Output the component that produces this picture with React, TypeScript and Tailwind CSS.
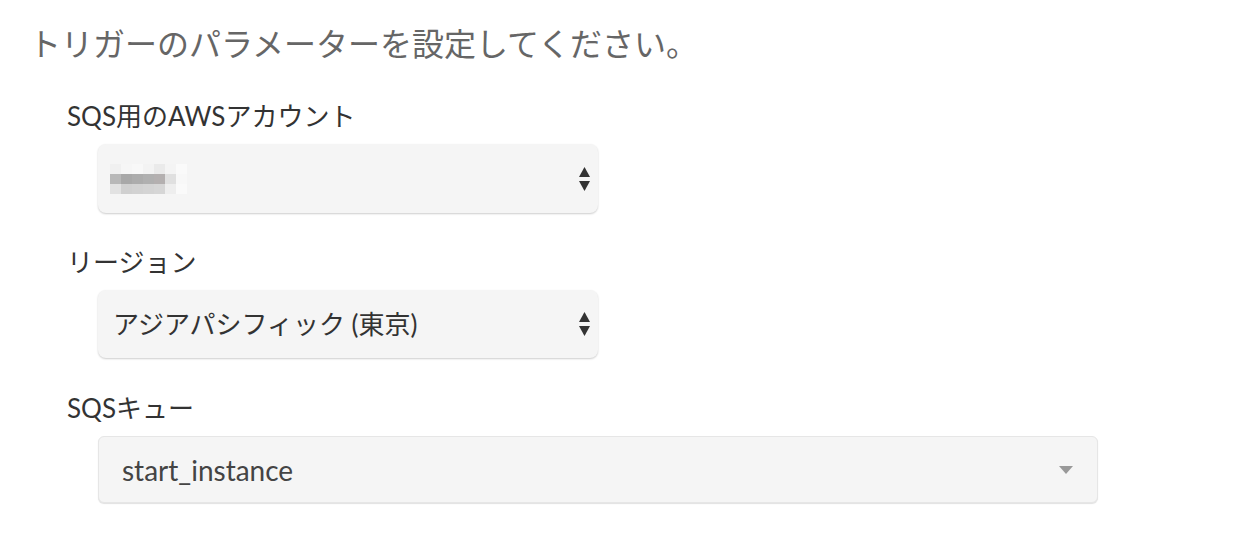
import React from "react";

const font = { fontFamily: 'Lato, "Noto Sans CJK JP", sans-serif' } as React.CSSProperties;

function UpDown() {
  return (
    <svg width="13" height="26" viewBox="0 0 13 26" className="shrink-0">
      <polygon points="6.5,1 12,11 1,11" fill="#333" />
      <polygon points="1,15 12,15 6.5,25" fill="#333" />
    </svg>
  );
}

function Caret() {
  return (
    <svg width="14" height="8" viewBox="0 0 14 8" className="shrink-0">
      <polygon points="0,0 14,0 7,8" fill="#999" />
    </svg>
  );
}

function Blur() {
  const rows = [
    ["#f0f0f0", "#f6f6f6", "#f8f8f8", "#f3f3f3", "#eaeaea", "#f4f4f4", "#fafafa"],
    ["#b8b8b8", "#a8a8a8", "#acacac", "#b0b0b0", "#b4b0b0", "#e0e0e0", "#f8f8f8"],
    ["#e2e2e2", "#d0d0d0", "#d2d2d2", "#d4d4d4", "#d6d6d6", "#eeeeee", "#fafafa"],
  ];
  return (
    <div className="flex flex-col">
      {rows.map((r, i) => (
        <div key={i} className="flex">
          {r.map((c, j) => (
            <div key={j} className="w-[11px] h-[10px]" style={{ background: c }} />
          ))}
        </div>
      ))}
    </div>
  );
}

export default function App() {
  return (
    <div className="w-[1244px] h-[550px] bg-white pl-[29px] pt-[22px]" style={font}>
      <h1
        className="text-[32px] leading-[40px] text-[#666]"
        style={{ fontFamily: '"Noto Sans CJK JP", sans-serif', fontWeight: 400 }}
      >
        トリガーのパラメーターを設定してください。
      </h1>
      <div className="pl-[38px]">
        <div className="mt-[39px] text-[26px] leading-[30px] text-[#333] font-normal">
          SQS用のAWSアカウント
        </div>
        <div className="ml-[31px] mt-[13px] w-[500px] h-[69px] rounded-[8px] bg-[#f5f5f5] shadow-[0_1px_2px_rgba(0,0,0,0.2)] flex items-center justify-between pl-[12px] pr-[7px]">
          <Blur />
          <UpDown />
        </div>

        <div className="mt-[34px] text-[26px] leading-[30px] text-[#333] font-normal">
          リージョン
        </div>
        <div className="ml-[31px] mt-[13px] w-[500px] h-[68px] rounded-[8px] bg-[#f5f5f5] shadow-[0_1px_2px_rgba(0,0,0,0.2)] flex items-center justify-between pl-[15px] pr-[7px]">
          <span className="text-[26px] text-[#333]">アジアパシフィック (東京)</span>
          <UpDown />
        </div>

        <div className="mt-[35px] text-[26px] leading-[30px] text-[#333] font-normal">
          SQSキュー
        </div>
        <div className="ml-[31px] mt-[13px] w-[1000px] h-[67px] rounded-[6px] bg-[#f5f5f5] border border-[#e6e6e6] shadow-[0_1px_1px_rgba(0,0,0,0.12)] flex items-center justify-between pl-[23px] pr-[24px]">
          <span className="text-[28px] text-[#444]">start_instance</span>
          <Caret />
        </div>
      </div>
    </div>
  );
}
